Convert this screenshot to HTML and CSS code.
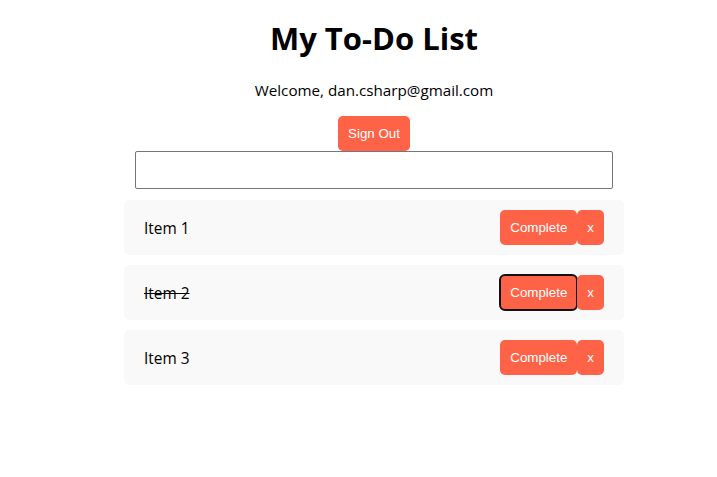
FILE: index.html
```html
<!DOCTYPE html>
<html lang="en">
<head>
<meta charset="utf-8">
<title>My To-Do List</title>
<link rel="stylesheet" href="styles.css">
</head>
<body>
<div class="app">
  <h1 class="title">My To-Do List</h1>
  <p class="welcome">Welcome, dan.csharp@gmail.com</p>
  <div class="signout-row"><button class="btn">Sign Out</button></div>
  <input class="new-item" type="text">
  <ul class="list">
    <li class="item"><span class="item-text">Item 1</span><div class="actions"><button class="btn">Complete</button><button class="btn">x</button></div></li>
    <li class="item"><span class="item-text done">Item 2</span><div class="actions"><button class="btn focused">Complete</button><button class="btn">x</button></div></li>
    <li class="item"><span class="item-text">Item 3</span><div class="actions"><button class="btn">Complete</button><button class="btn">x</button></div></li>
  </ul>
</div>
</body>
</html>
```
FILE: styles.css
```css
html, body {
  margin: 0;
  padding: 0;
  background: #ffffff;
}
.app {
  padding-left: 31px;
  font-family: "Open Sans", "Noto Sans", sans-serif;
  color: #000;
  display: flex;
  flex-direction: column;
  align-items: center;
}
.title {
  margin: 18px 0 0;
  font-size: 31px;
  line-height: 40px;
  font-weight: 700;
}
.welcome {
  margin: 22px 0 0;
  font-size: 15.2px;
  line-height: 20px;
}
.signout-row {
  margin-top: 16px;
}
.btn {
  font-family: "Liberation Sans", Arial, sans-serif;
  font-size: 13.333px;
  line-height: 15px;
  padding: 10px;
  border: none;
  border-radius: 5px;
  background: #ff6347;
  color: #ffffff;
  margin: 0;
  display: block;
}
.new-item {
  box-sizing: border-box;
  width: 478px;
  height: 38px;
  margin: 0;
  border: 1px solid #767676;
  border-radius: 2px;
  padding: 0 10px;
  font-size: 16px;
}
.list {
  list-style: none;
  margin: 11px 0 0;
  padding: 0;
  width: 500px;
  display: flex;
  flex-direction: column;
  gap: 10px;
}
.item {
  display: flex;
  align-items: center;
  justify-content: space-between;
  background: #f9f9f9;
  border-radius: 5px;
  padding: 10px 20px;
}
.item-text {
  font-size: 15.4px;
  padding-top: 1px;
}
.done {
  text-decoration: line-through;
}
.actions {
  display: flex;
}
.focused {
  outline: 2px solid #111111;
  outline-offset: -1px;
}
```
